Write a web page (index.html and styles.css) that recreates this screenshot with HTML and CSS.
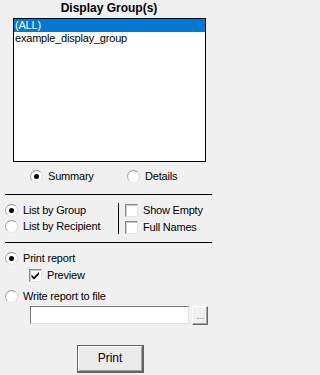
FILE: index.html
```html
<!DOCTYPE html>
<html>
<head>
<meta charset="utf-8">
<link rel="stylesheet" href="styles.css">
</head>
<body>
<div class="panel">
  <div class="title">Display Group(s)</div>
  <div class="listbox">
    <div class="item selected">(ALL)</div>
    <div class="item">example_display_group</div>
  </div>

  <div class="row view-row">
    <div class="opt opt-summary"><span class="radio checked"></span><span>Summary</span></div>
    <div class="opt"><span class="radio"></span><span>Details</span></div>
  </div>

  <div class="sep"></div>

  <div class="group-section">
    <div class="col-left">
      <div class="opt row"><span class="radio checked"></span><span>List by Group</span></div>
      <div class="opt row"><span class="radio"></span><span>List by Recipient</span></div>
    </div>
    <div class="col-right">
      <div class="opt row"><span class="check"></span><span>Show Empty</span></div>
      <div class="opt row"><span class="check"></span><span>Full Names</span></div>
    </div>
  </div>

  <div class="sep sep2"></div>

  <div class="opt row print-row"><span class="radio checked"></span><span>Print report</span></div>
  <div class="opt row preview-row"><span class="check"><svg width="11" height="11" viewBox="0 0 11 11"><path d="M1.5 4.5 L4 7 L9 2 L9 4.5 L4 9.5 L1.5 7 Z" fill="#000"/></svg></span><span>Preview</span></div>
  <div class="opt row write-row"><span class="radio"></span><span>Write report to file</span></div>
  <div class="file-row">
    <div class="field"></div>
    <div class="browse">...</div>
  </div>
  <div class="btn-row">
    <div class="btn">Print</div>
  </div>
</div>
</body>
</html>
```
FILE: styles.css
```css
html, body {
  margin: 0;
  padding: 0;
  background: #f0f0f0;
}
body {
  font-family: "Liberation Sans", Arial, sans-serif;
  font-size: 11px;
  letter-spacing: -0.2px;
  color: #000;
  width: 215px;
  height: 375px;
  overflow: hidden;
}
.panel {
  display: flex;
  flex-direction: column;
}
.title {
  height: 18px;
  line-height: 17px;
  font-weight: bold;
  font-size: 12px;
  letter-spacing: 0;
  text-align: center;
  padding-left: 3px;
}
.listbox {
  margin-left: 13px;
  width: 193px;
  height: 144px;
  box-sizing: border-box;
  border: 1px solid #000;
  background: #fff;
}
.item {
  height: 13px;
  line-height: 13px;
  padding-left: 1px;
  white-space: nowrap;
}
.item.selected {
  background: #0078d7;
  color: #fff;
}
.row {
  height: 16px;
}
.opt {
  display: flex;
  align-items: center;
  gap: 5px;
  height: 16px;
  white-space: nowrap;
}
.view-row {
  display: flex;
  margin-top: 6px;
  padding-left: 30px;
}
.opt-summary {
  width: 97px;
}
.radio {
  width: 13px;
  height: 13px;
  box-sizing: border-box;
  border-radius: 50%;
  border: 1px solid;
  border-color: #9a9a9a #d8d8d8 #e8e8e8 #a8a8a8;
  background: radial-gradient(circle at 60% 60%, #ffffff 55%, #e6e6e6 100%);
  display: flex;
  align-items: center;
  justify-content: center;
  flex: none;
}
.radio.checked::after {
  content: "";
  width: 5px;
  height: 5px;
  border-radius: 50%;
  background: #000;
}
.check {
  width: 13px;
  height: 13px;
  box-sizing: border-box;
  border: 1px solid;
  border-color: #8a8a8a #e3e3e3 #e3e3e3 #8a8a8a;
  box-shadow: inset 1px 1px 0 #c8c8c8;
  background: #fff;
  display: flex;
  align-items: center;
  justify-content: center;
  flex: none;
}
.check svg {
  display: block;
}
.sep {
  margin-top: 10px;
  margin-left: 5px;
  width: 207px;
  height: 1px;
  background: #000;
}
.group-section {
  display: flex;
  margin-top: 7px;
}
.col-left {
  width: 113px;
  padding-left: 5px;
}
.col-right {
  border-left: 1px solid #000;
  padding-left: 6px;
  margin-top: 1px;
  height: 31px;
}
.col-right .row {
  margin-top: -1px;
}
.col-right .row + .row {
  margin-top: 1px;
}
.sep2 {
  margin-top: 8px;
}
.print-row {
  margin-top: 7px;
  padding-left: 5px;
}
.preview-row {
  margin-top: 1px;
  padding-left: 29px;
}
.write-row {
  margin-top: 5px;
  padding-left: 5px;
}
.file-row {
  display: flex;
  gap: 3px;
  margin-top: 2px;
  padding-left: 30px;
  height: 19px;
}
.field {
  width: 159px;
  height: 18px;
  box-sizing: border-box;
  border: 1px solid;
  border-color: #7a7a7a #e3e3e3 #e3e3e3 #7a7a7a;
  background: #fff;
}
.browse {
  width: 16px;
  height: 19px;
  box-sizing: border-box;
  border: 1px solid;
  border-color: #ffffff #6a6a6a #6a6a6a #ffffff;
  box-shadow: inset -1px -1px 0 #a0a0a0;
  background: #f0f0f0;
  color: #8a8a8a;
  font-size: 11px;
  line-height: 16px;
  text-align: center;
  letter-spacing: -0.5px;
}
.btn-row {
  margin-top: 20px;
  padding-left: 77px;
}
.btn {
  width: 67px;
  height: 28px;
  box-sizing: border-box;
  border: 1px solid #646464;
  border-right-width: 2px;
  border-bottom-width: 2px;
  box-shadow: inset 1px 1px 0 #ffffff, inset -1px -1px 0 #a0a0a0;
  background: #ececec;
  text-align: center;
  line-height: 24px;
  font-size: 12px;
  letter-spacing: 0;
}
```
